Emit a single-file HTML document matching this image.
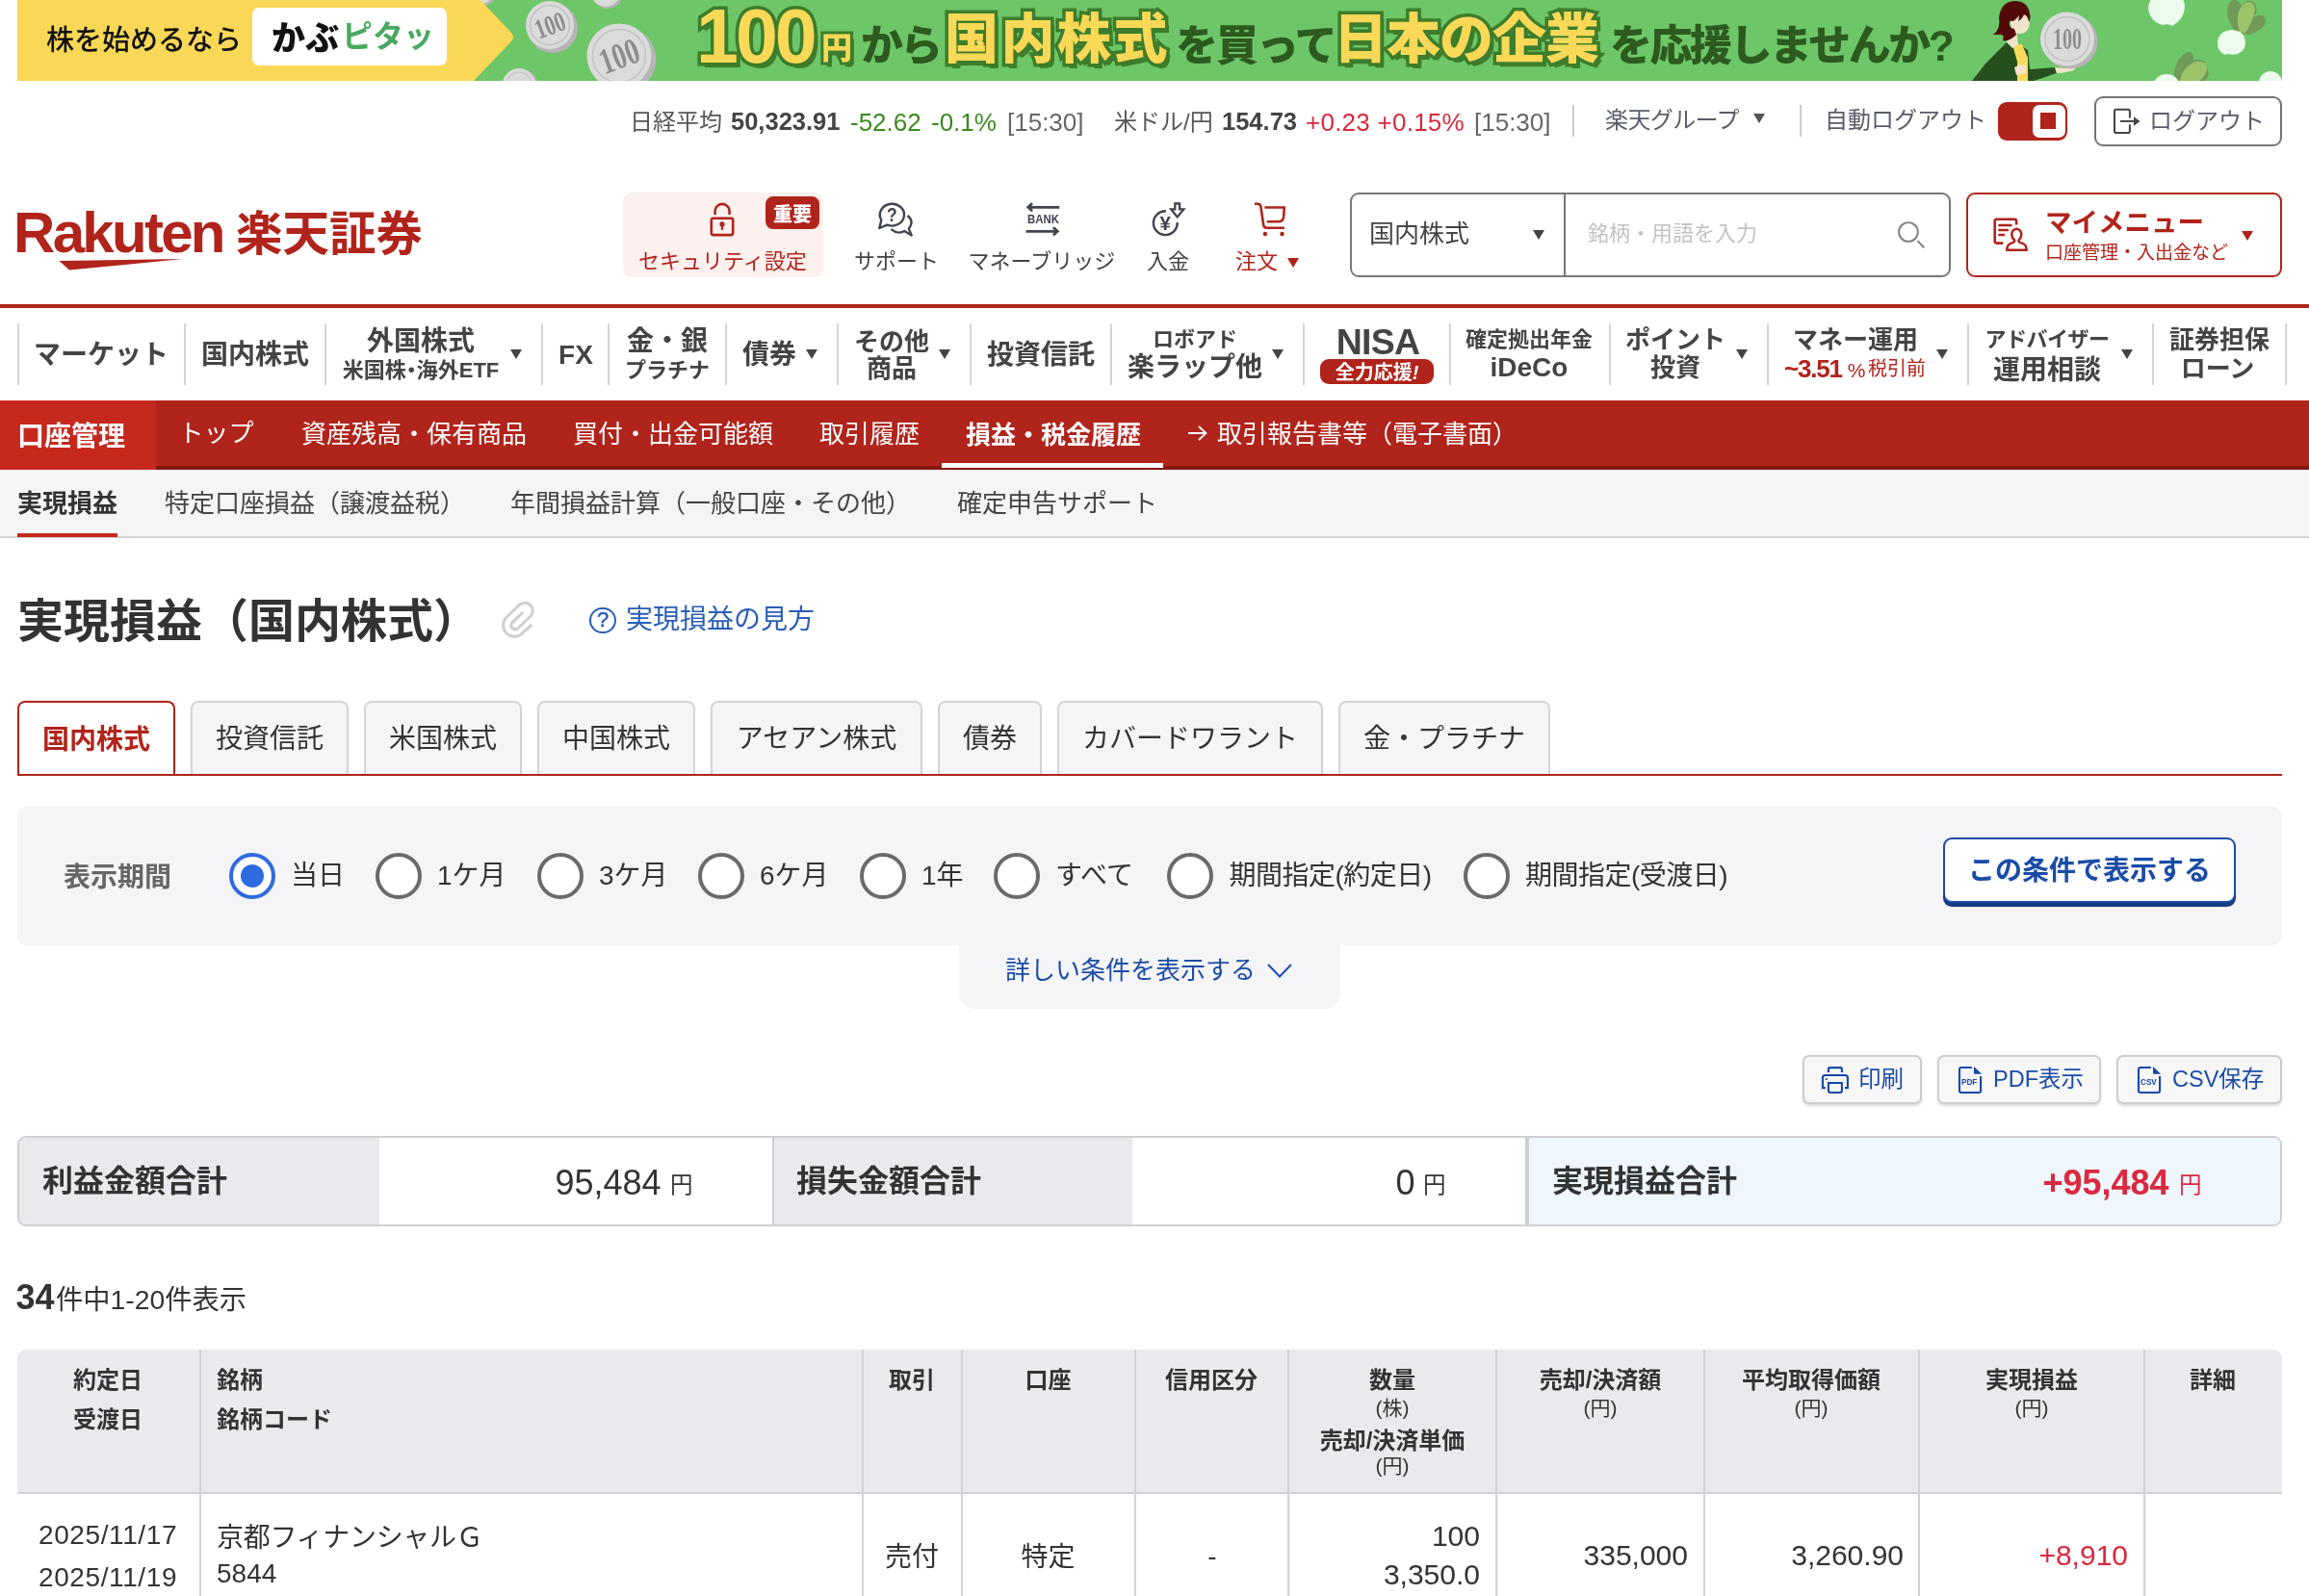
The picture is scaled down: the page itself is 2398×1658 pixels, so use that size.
<!DOCTYPE html>
<html lang="ja">
<head>
<meta charset="utf-8">
<title>実現損益（国内株式） | 楽天証券</title>
<style>
html,body{margin:0;padding:0;background:#fff;}
body{width:2398px;height:1658px;position:relative;overflow:hidden;font-family:"Liberation Sans","Noto Sans CJK JP",sans-serif;color:#333;-webkit-font-smoothing:antialiased;}
.a{position:absolute;white-space:nowrap;line-height:1;}
.b{font-weight:700;}
.red{color:#b0241b;}
.blue{color:#1a4ba7;}
.c{transform:translateX(-50%);}
.td{font-size:28px !important;}
.td.n{font-size:30px !important;}
svg{display:block;overflow:visible;}
/* banner */
#banner{left:18px;top:0;width:2352px;height:84px;background:#6dc667;overflow:hidden;}
.big{font-family:"Liberation Sans","Noto Sans CJK JP",sans-serif;font-weight:900;}
.yl{color:#f9d957;-webkit-text-stroke:7px #3d7d2c;paint-order:stroke fill;text-shadow:3px 4px 0 #3d7d2c,4px 5px 0 #3d7d2c;}
.dg{color:#2c5a1f;}
/* global nav */
.gsep{position:absolute;top:336px;width:2px;height:64px;background:#d4d4d4;}
.gn{position:absolute;white-space:nowrap;line-height:1;font-weight:700;color:#444;font-size:28px;text-align:center;}
.tri{position:absolute;width:0;height:0;border-left:6px solid transparent;border-right:6px solid transparent;border-top:10px solid #444;}
/* red bar */
#rbar{left:0;top:416px;width:2398px;height:68px;background:#b0241b;border-bottom:4px solid #84160e;}
.rb{position:absolute;white-space:nowrap;line-height:1;color:#fff;font-size:26px;top:437.500px;}
/* subnav */
#sub{left:0;top:488px;width:2398px;height:69px;background:#f5f5f7;border-bottom:2px solid #d2d2d4;}
.sb{position:absolute;white-space:nowrap;line-height:1;font-size:26px;top:510px;color:#444;}
/* tabs */
.tab{position:absolute;top:728px;height:76px;box-sizing:border-box;background:#f5f5f7;border:2px solid #d4d4d6;border-bottom:none;border-radius:8px 8px 0 0;font-size:28px;line-height:1;text-align:center;padding-top:23.500px;color:#333;}
.rad{position:absolute;top:886px;width:48px;height:48px;box-sizing:border-box;border:4px solid #6a6a6a;border-radius:50%;background:#fff;}
.rl{position:absolute;white-space:nowrap;line-height:1;font-size:28px;top:896px;color:#333;}
.btn{position:absolute;top:1096px;height:51px;box-sizing:border-box;background:#f7f7f8;border:2px solid #cdcdcf;border-radius:7px;box-shadow:0 1.500px 2.500px rgba(0,0,0,.14);}
.btn span{position:absolute;white-space:nowrap;line-height:1;font-size:23.500px;top:12px;color:#1a4ba7;}
/* table */
.th,.ths{margin-top:0.500px;}
.th{position:absolute;white-space:nowrap;line-height:1;font-size:24px;font-weight:700;color:#333;}
.ths{position:absolute;white-space:nowrap;line-height:1;font-size:21px;color:#333;}
.vs{position:absolute;top:1402px;width:2px;height:256px;background:#d2d2d4;}
.td{position:absolute;white-space:nowrap;line-height:1;font-size:27px;color:#333;}
</style>
</head>
<body>
<div id="wrap" style="position:absolute;left:0;top:0;width:2398px;height:1658px;will-change:transform">
<!-- ===== BANNER ===== -->
<div class="a" id="banner">
  <svg class="a" style="left:0;top:0" width="2351" height="84" viewBox="18 0 2351 84">
    <g id="coins">
      <circle cx="501" cy="-9" r="15" fill="#b5b5b5"/><circle cx="499" cy="-11" r="15" fill="#dbdbdb"/>
      <circle cx="574" cy="29" r="26" fill="#b5b5b5"/><circle cx="571" cy="26" r="25" fill="#dbdbdb"/><circle cx="571" cy="26" r="20.500" fill="none" stroke="#c2c2c2" stroke-width="1.500"/>
      <circle cx="647" cy="62" r="34.500" fill="#b5b5b5"/><circle cx="643" cy="58" r="33.500" fill="#dbdbdb"/><circle cx="643" cy="58" r="27.500" fill="none" stroke="#c2c2c2" stroke-width="1.500"/>
      <circle cx="541" cy="90" r="18" fill="#b5b5b5"/><circle cx="539" cy="88" r="17" fill="#dbdbdb"/><circle cx="539" cy="88" r="13" fill="none" stroke="#c2c2c2" stroke-width="1.200"/>
      <circle cx="631" cy="-6" r="15" fill="#b5b5b5"/><circle cx="629" cy="-8" r="15" fill="#dbdbdb"/>
    </g>
    <path d="M18 0 H499 L530.500 33.500 Q535.500 38 531 43 L492 84 H18 Z" fill="#f8d856"/>
    <text x="571" y="36" font-family="Liberation Serif,serif" font-size="29" font-weight="700" fill="#8c8c8c" text-anchor="middle" textLength="32" lengthAdjust="spacingAndGlyphs" transform="rotate(-20 571 26)">100</text>
    <text x="643" y="71" font-family="Liberation Serif,serif" font-size="38" font-weight="700" fill="#8c8c8c" text-anchor="middle" textLength="42" lengthAdjust="spacingAndGlyphs" transform="rotate(-20 643 58)">100</text>
  </svg>
  <div class="a" style="left:30px;top:27.600px;font-size:29px;font-weight:500;color:#111;font-family:'Liberation Sans','Noto Sans CJK JP',sans-serif">株を始めるなら</div>
  <div class="a" style="left:244px;top:8px;width:202px;height:60px;background:#fff;border-radius:7px"></div>
  <div class="a" style="left:264px;top:21.500px;font-size:35px;font-weight:900;color:#111;font-family:'Liberation Sans','Noto Sans CJK JP',sans-serif">かぶ</div>
  <div class="a" style="left:337px;top:22.300px;font-size:32px;font-weight:700;color:#4aa860;font-family:'Liberation Sans','Noto Sans CJK JP',sans-serif">ピタッ</div>
  <div class="a big yl" style="left:705px;top:-2px;font-size:79px;letter-spacing:-3px">100</div>
  <div class="a big yl" style="left:835px;top:33.900px;font-size:32px;-webkit-text-stroke-width:6px">円</div>
  <div class="a big dg" style="left:876px;top:25.900px;font-size:44px;letter-spacing:-3px">から</div>
  <div class="a big yl" style="left:963px;top:12.500px;font-size:56px;letter-spacing:2.500px">国内株式</div>
  <div class="a big dg" style="left:1203px;top:25.900px;font-size:44px;letter-spacing:-2px">を買って</div>
  <div class="a big yl" style="left:1367px;top:12.500px;font-size:56px;letter-spacing:-1px">日本の企業</div>
  <div class="a big dg" style="left:1654px;top:25.900px;font-size:44px;letter-spacing:-2.500px">を応援しませんか?</div>
  <svg class="a" style="left:0;top:0" width="2351" height="84" viewBox="18 0 2351 84">
    <!-- woman -->
    <path d="M2048 84 L2062 66 L2078 50 L2084 44 L2096 46 L2106 52 L2108 72 L2134 70 L2136 76 L2112 84 Z" fill="#264f1e"/>
    <path d="M2090 46 L2100 46 L2106 60 L2106 84 L2095 84 L2095 64 Z" fill="#fada5e"/>
    <path d="M2086 30 L2094 30 L2096 46 L2090 50 L2084 44 Z" fill="#f2e4cc"/>
    <ellipse cx="2098" cy="24" rx="10" ry="11" fill="#f2e4cc"/>
    <path d="M2070 36 Q2078 30 2076 18 Q2078 2 2092 1 Q2106 1 2108 14 Q2109 20 2107 23 Q2106 16 2102 15 Q2100 20 2096 22 L2097 16 Q2092 22 2090 22 Q2086 20 2087 26 Q2088 30 2092 30 L2094 36 Q2086 44 2080 42 Q2082 36 2078 36 Z" fill="#520a08"/>
    <path d="M2092 70 Q2098 66 2104 68 L2104 76 L2094 78 Z" fill="#f2e4cc"/>
    <path d="M2134 70 Q2146 72 2156 69 L2154 73 Q2144 76 2136 76 Z" fill="#f2e4cc"/>
    <!-- coin -->
    <circle cx="2150" cy="43" r="28.500" fill="#b5b5b5"/><circle cx="2147" cy="40.500" r="28" fill="#dbdbdb"/><circle cx="2147" cy="40.500" r="23" fill="none" stroke="#c2c2c2" stroke-width="1.500"/>
    <text x="2147" y="51" font-family="Liberation Serif,serif" font-size="31" font-weight="700" fill="#8c8c8c" text-anchor="middle" textLength="30" lengthAdjust="spacingAndGlyphs">100</text>
    <!-- turnips & leaves -->
    <path d="M2322 34 Q2308 14 2316 2 Q2322 -4 2328 6 Q2336 -4 2342 4 Q2346 12 2340 18 Q2352 12 2353 22 Q2352 30 2336 36 Z" fill="#6f9a58"/>
    <path d="M2326 34 Q2320 14 2330 4 Q2340 -2 2342 10 Q2340 22 2332 34 Z" fill="#9cc468"/>
    <path d="M2258 84 Q2256 66 2268 56 Q2278 50 2278 62 Q2290 60 2292 70 Q2296 78 2290 84 Z" fill="#6f9a58"/>
    <path d="M2264 84 Q2266 70 2280 64 Q2292 62 2292 72 Q2290 80 2284 84 Z" fill="#9cc468"/>
    <path d="M2231 8 Q2233 -8 2250 -8 Q2269 -8 2269 8 Q2268 20 2256 27 Q2252 24 2246 26 Q2232 22 2231 8 Z" fill="#ecfcec"/>
    <path d="M2303 44 Q2304 32 2318 31 Q2332 32 2332 45 Q2331 56 2318 57 Q2314 55 2311 57 Q2303 54 2303 44 Z" fill="#ecfcec"/>
    <ellipse cx="2250" cy="88" rx="13" ry="11" fill="#ecfcec"/>
    <ellipse cx="2358" cy="86" rx="12" ry="12" fill="#ecfcec"/>
  </svg>
</div>

<!-- ===== TICKER ===== -->
<div class="a" style="left:654px;top:114.500px;font-size:24px;color:#555">日経平均</div>
<div class="a b" style="left:759px;top:113.500px;font-size:25.5px;color:#444">50,323.91</div>
<div class="a" style="left:883px;top:113.500px;font-size:26px;color:#3a8a1e">-52.62</div><div class="a" style="left:967px;top:113.500px;font-size:26px;color:#3a8a1e">-0.1%</div>
<div class="a" style="left:1046px;top:113.500px;font-size:26px;color:#666">[15:30]</div>
<div class="a" style="left:1157px;top:114.500px;font-size:24px;color:#555">米ドル/円</div>
<div class="a b" style="left:1269px;top:113.500px;font-size:25.5px;color:#444">154.73</div>
<div class="a" style="left:1356px;top:113.500px;font-size:26px;letter-spacing:0.250px;color:#d62a3c">+0.23 +0.15%</div>
<div class="a" style="left:1531px;top:113.500px;font-size:26px;color:#666">[15:30]</div>
<div class="a" style="left:1633px;top:109px;width:2px;height:33px;background:#ccc"></div>
<div class="a" style="left:1667px;top:113px;font-size:24px;letter-spacing:-0.600px;color:#595d69">楽天グループ</div>
<div class="tri" style="left:1821px;top:118px;border-top-color:#555"></div>
<div class="a" style="left:1869px;top:109px;width:2px;height:33px;background:#ccc"></div>
<div class="a" style="left:1895px;top:113px;font-size:24px;color:#595d69">自動ログアウト</div>
<div class="a" style="left:2075px;top:106px;width:72px;height:40px;background:#b0241b;border-radius:9px"></div>
<div class="a" style="left:2110.500px;top:109px;width:34.500px;height:34px;background:#fff;border-radius:7px"></div>
<div class="a" style="left:2119px;top:117px;width:16px;height:17px;background:#b0241b"></div>
<div class="a" style="left:2175px;top:100px;width:195px;height:52px;box-sizing:border-box;border:2px solid #757575;border-radius:9px"></div>
<svg class="a" style="left:2180px;top:98px" width="60" height="55" viewBox="2180 98 60 55"><path d="M2211.900 122.600 V115.650 Q2211.900 113.850 2210.100 113.850 H2197.800 Q2196 113.850 2196 115.650 V136.200 Q2196 138 2197.800 138 H2210.100 Q2211.900 138 2211.900 136.200 V129.200" fill="none" stroke="#444" stroke-width="2"/><path d="M2202.050 125.900 H2217" stroke="#444" stroke-width="2"/><path d="M2216 121.300 L2222.600 125.900 L2216 130.700 Z" fill="#444"/></svg>
<div class="a" style="left:2232px;top:113.500px;font-size:24px;color:#595d69">ログアウト</div>

<!-- ===== HEADER ===== -->
<div class="a b red" style="left:14px;top:212px;font-size:60px;letter-spacing:-2.700px" id="rk">Rakuten</div>
<svg class="a" style="left:61px;top:269px" width="130" height="12" viewBox="0 0 130 12"><path d="M0.500 2 L129 0 Q70 6 11 11.500 Z" fill="#b0241b"/></svg>
<div class="a red" style="left:245px;top:219.300px;font-size:48.500px;font-weight:700;font-family:'Liberation Sans','Noto Sans CJK JP',sans-serif" id="rs">楽天証券</div>

<div class="a" style="left:647px;top:200px;width:208px;height:88px;background:#fdf1ef;border-radius:9px"></div>
<div class="a red" style="left:663px;top:261px;font-size:22px">セキュリティ設定</div>
<div class="a" style="left:795px;top:204px;width:56px;height:34px;background:#b0241b;border-radius:8px"></div>
<div class="a b" style="left:803px;top:212.800px;font-size:20px;color:#fff;font-family:'Liberation Sans','Noto Sans CJK JP',sans-serif;font-weight:900">重要</div>
<svg class="a" style="left:720px;top:200px" width="60" height="55" viewBox="720 200 60 55"><rect x="738.800" y="226.700" width="22.400" height="17.400" rx="2" fill="none" stroke="#b0241b" stroke-width="2.600"/><path d="M742.600 222.900 V219.400 A7.500 7.500 0 0 1 757.600 219.400 V222.900" fill="none" stroke="#b0241b" stroke-width="2.600"/><circle cx="750" cy="232.900" r="2.600" fill="#b0241b"/><rect x="748.900" y="233" width="2.200" height="5.900" fill="#b0241b"/></svg>

<svg class="a" style="left:900px;top:200px" width="60" height="55" viewBox="900 200 60 55"><path d="M915.300 228.500 L913.300 237 L921.400 233.600 A12.600 11.400 0 1 0 915.300 228.500 Z" fill="none" stroke="#40444f" stroke-width="2.400" stroke-linejoin="round"/><path d="M942.600 223.800 Q947.500 228.500 946.300 232.500 Q945.500 235.500 943.800 237.600 L946.700 244.500 L939.300 240 Q932.500 244 925.500 238.200" fill="none" stroke="#40444f" stroke-width="2.400" stroke-linejoin="round"/></svg>
<div class="a b" style="left:919.600px;top:212.500px;font-size:20.500px;color:#40444f;transform:scaleX(0.85)">?</div>
<div class="a" style="left:887px;top:261px;font-size:22px;color:#444">サポート</div>

<svg class="a" style="left:1052px;top:200px" width="60" height="55" viewBox="1052 200 60 55"><path d="M1100.200 215.300 H1068.500 M1072.100 211.300 L1067.700 215.300 L1072.100 219.300" fill="none" stroke="#40444f" stroke-width="2.700" stroke-linejoin="miter"/><path d="M1065.600 240.300 H1097.500 M1093.900 236.300 L1098.300 240.300 L1093.900 244.300" fill="none" stroke="#40444f" stroke-width="2.700" stroke-linejoin="miter"/></svg>
<div class="a b" style="left:1066.600px;top:222.300px;font-size:12.500px;color:#40444f;letter-spacing:0px;transform:scaleX(0.91);transform-origin:0 0">BANK</div>
<div class="a" style="left:1005.500px;top:261px;font-size:22px;color:#444">マネーブリッジ</div>

<svg class="a" style="left:1190px;top:200px" width="60" height="55" viewBox="1190 200 60 55"><path d="M1210.950 219.300 A12.400 12.400 0 1 0 1222.700 231.050" fill="none" stroke="#40444f" stroke-width="2.400"/><path d="M1220.300 211.500 H1225.100 V217.400 H1229.300 L1222.700 225.400 L1216.200 217.400 H1220.300 Z" fill="#fff" stroke="#40444f" stroke-width="2.300" stroke-linejoin="miter"/></svg>
<div class="a b" style="left:1204.600px;top:221.500px;font-size:20.500px;color:#40444f">¥</div>
<div class="a" style="left:1191px;top:261px;font-size:22px;color:#444">入金</div>

<svg class="a" style="left:1300px;top:208px" width="38" height="40" viewBox="1300 208 38 40"><path d="M1302.900 211.700 H1306 Q1308.900 211.700 1309.400 214.700 L1312.200 233.800 Q1312.700 236.700 1315.600 236.700 H1333.900" fill="none" stroke="#b0241b" stroke-width="2.600" stroke-linecap="butt" stroke-linejoin="round"/><path d="M1313.400 215.500 H1333.800 L1333.100 225.200 Q1332.600 230.300 1327.500 230.300 H1315.700" fill="none" stroke="#b0241b" stroke-width="2.600" stroke-linejoin="miter"/><circle cx="1313.900" cy="242.900" r="2.250" fill="#b0241b"/><circle cx="1331.500" cy="242.900" r="2.250" fill="#b0241b"/></svg>
<div class="a red" style="left:1283px;top:261px;font-size:22px">注文</div>
<div class="tri" style="left:1337px;top:267.500px;border-top-color:#b0241b"></div>

<div class="a" style="left:1402px;top:200px;width:624px;height:88px;box-sizing:border-box;border:2px solid #777;border-radius:9px"></div>
<div class="a" style="left:1624px;top:201px;width:2px;height:86px;background:#777"></div>
<div class="a" style="left:1422px;top:230px;font-size:26px;color:#444">国内株式</div>
<div class="tri" style="left:1592px;top:239px"></div>
<div class="a" style="left:1649px;top:232px;font-size:22px;color:#c2c2c2">銘柄・用語を入力</div>
<svg class="a" style="left:1960px;top:215px" width="60" height="55" viewBox="1960 215 60 55"><circle cx="1981.950" cy="241" r="9.900" fill="none" stroke="#7f7f7f" stroke-width="1.900"/><path d="M1991.400 250.100 L1998.300 257.300" stroke="#7f7f7f" stroke-width="2"/></svg>

<div class="a" style="left:2042px;top:200px;width:328px;height:88px;box-sizing:border-box;border:2px solid #b0241b;border-radius:9px"></div>
<svg class="a" style="left:2060px;top:215px" width="60" height="55" viewBox="2060 215 60 55"><path d="M2094.100 233.600 V229.750 Q2094.100 227.750 2092.100 227.750 H2073.700 Q2071.700 227.750 2071.700 229.750 V250.600 Q2071.700 252.600 2073.700 252.600 H2080.300" fill="none" stroke="#b0241b" stroke-width="2.600"/><path d="M2076.300 233.950 H2088.500 M2076.300 238.950 H2084.900 M2076.300 243.950 H2081.100" fill="none" stroke="#b0241b" stroke-width="2.400" stroke-linecap="round"/><path d="M2091.600 248.700 A5 6 0 1 1 2097 248.700 Q2095.600 250.700 2097.400 251.600 Q2103.500 253.800 2104 256 L2104.800 259.800 H2084.100 L2084.900 256 Q2085.300 253.800 2091.200 251.600 Q2093 250.700 2091.600 248.700 Z" fill="#fff" stroke="#b0241b" stroke-width="2.500" stroke-linejoin="round"/></svg>
<div class="a b red" style="left:2124px;top:217.500px;font-size:27.500px">マイメニュー</div>
<div class="a red" style="left:2124px;top:253px;font-size:19px">口座管理・入出金など</div>
<div class="tri" style="left:2328px;top:240px;border-top-color:#b0241b"></div>

<div class="a" style="left:0;top:316px;width:2398px;height:4px;background:#b0241b"></div>
<!-- ===== GLOBAL NAV ===== -->
<div class="gsep" style="left:18px"></div><div class="gsep" style="left:191px"></div><div class="gsep" style="left:337px"></div><div class="gsep" style="left:562px"></div><div class="gsep" style="left:631px"></div><div class="gsep" style="left:753px"></div><div class="gsep" style="left:869px"></div><div class="gsep" style="left:1007px"></div><div class="gsep" style="left:1153px"></div><div class="gsep" style="left:1353px"></div><div class="gsep" style="left:1505px"></div><div class="gsep" style="left:1671px"></div><div class="gsep" style="left:1835px"></div><div class="gsep" style="left:2043px"></div><div class="gsep" style="left:2235px"></div><div class="gsep" style="left:2373px"></div>
<div class="gn c" style="left:105px;top:355px">マーケット</div>
<div class="gn c" style="left:265px;top:355px">国内株式</div>
<div class="gn c" style="left:437px;top:341px">外国株式</div>
<div class="gn c" style="left:437px;top:374px;font-size:22px">米国株<span style="margin:0 -5.500px">・</span>海外ETF</div>
<div class="tri" style="left:530px;top:363px"></div>
<div class="gn c" style="left:598px;top:355px">FX</div>
<div class="gn c" style="left:693px;top:341px">金・銀</div>
<div class="gn c" style="left:693px;top:374px;font-size:22px">プラチナ</div>
<div class="gn c" style="left:799px;top:355px">債券</div>
<div class="tri" style="left:837px;top:363px"></div>
<div class="gn c" style="left:926px;top:342px;font-size:26px">その他</div>
<div class="gn c" style="left:926px;top:370px;font-size:26px">商品</div>
<div class="tri" style="left:975px;top:363px"></div>
<div class="gn c" style="left:1081px;top:355px">投資信託</div>
<div class="gn c" style="left:1241px;top:342px;font-size:22px">ロボアド</div>
<div class="gn c" style="left:1241px;top:368px">楽ラップ他</div>
<div class="tri" style="left:1321px;top:363px"></div>
<div class="gn c" style="left:1431px;top:336.500px;font-size:37.500px;letter-spacing:-0.800px">NISA</div>
<div class="a" style="left:1371px;top:373px;width:118px;height:26px;background:#b0241b;border-radius:9px"></div>
<div class="gn c" style="left:1430px;top:377px;font-size:20px;color:#fff;letter-spacing:0">全力応援<i>!</i></div>
<div class="gn c" style="left:1588px;top:342px;font-size:22px">確定拠出年金</div>
<div class="gn c" style="left:1588px;top:367.500px;font-size:28px">iDeCo</div>
<div class="gn c" style="left:1740px;top:340px;font-size:26px">ポイント</div>
<div class="gn c" style="left:1740px;top:368.500px;font-size:26px">投資</div>
<div class="tri" style="left:1803px;top:363px"></div>
<div class="gn c" style="left:1927px;top:340px;font-size:26px">マネー運用</div>
<div class="gn" style="left:1853px;top:370px;font-size:26px;color:#b0241b;letter-spacing:-1.200px">~3.51<span style="font-size:21px;font-weight:400;margin-left:6px;letter-spacing:0">%</span></div><div class="gn" style="left:1940px;top:373px;font-size:20px;font-weight:400;color:#b0241b">税引前</div>
<div class="tri" style="left:2011px;top:363px"></div>
<div class="gn c" style="left:2126px;top:342px;font-size:22px;letter-spacing:-0.500px">アドバイザー</div>
<div class="gn c" style="left:2126px;top:371px">運用相談</div>
<div class="tri" style="left:2203px;top:363px"></div>
<div class="gn c" style="left:2305px;top:340px;font-size:26px">証券担保</div>
<div class="gn c" style="left:2303px;top:370px;font-size:26px">ローン</div>

<!-- ===== RED BAR ===== -->
<div class="a" id="rbar"></div>
<div class="a" style="left:0;top:416px;width:162px;height:72px;background:#c5291e"></div>
<div class="a b" style="left:18px;top:439.500px;font-size:28px;color:#fff">口座管理</div>
<div class="rb" style="left:185.500px;top:436.500px">トップ</div>
<div class="rb" style="left:313px">資産残高・保有商品</div>
<div class="rb" style="left:595px">買付・出金可能額</div>
<div class="rb" style="left:851px">取引履歴</div>
<div class="rb b" style="left:1003px;top:439px">損益・税金履歴</div>
<div class="a" style="left:978px;top:481px;width:230px;height:5px;background:#fff"></div>
<svg class="a" style="left:1234px;top:442px" width="20" height="16" viewBox="0 0 20 16"><path d="M0 8 H18 M11 1 L18.500 8 L11 15" fill="none" stroke="#fff" stroke-width="1.800"/></svg>
<div class="rb" style="left:1264px">取引報告書等（電子書面）</div>
<!-- ===== SUB NAV ===== -->
<div class="a" id="sub"></div>
<div class="sb b" style="left:18px;color:#333">実現損益</div>
<div class="a" style="left:18px;top:554px;width:104px;height:4px;background:#c5291e"></div>
<div class="sb" style="left:171px">特定口座損益（譲渡益税）</div>
<div class="sb" style="left:530px">年間損益計算（一般口座・その他）</div>
<div class="sb" style="left:994px">確定申告サポート</div>

<!-- ===== TITLE ===== -->
<div class="a b" style="left:18px;top:622px;font-size:48px;color:#333">実現損益（国内株式）</div>
<svg class="a" style="left:515px;top:620px" width="45" height="48" viewBox="515 620 45 48"><path d="M552.200 649 L540.900 659.200 A11.700 11.700 0 0 1 525.700 641.600 L539.400 628.400 A8.300 8.300 0 0 1 551.800 639.300 L538.200 652.500 A4.300 4.300 0 0 1 531.600 647.100 L543.300 635.800" fill="none" stroke="#cfcfcf" stroke-width="3.100" stroke-linecap="butt"/></svg>
<div class="a" style="left:612px;top:630.500px;width:27.500px;height:27.500px;box-sizing:border-box;border:2.400px solid #2a5db8;border-radius:50%"></div>
<div class="a" style="left:620px;top:633px;font-size:22px;color:#2a5db8;-webkit-text-stroke:0.500px #2a5db8">?</div>
<div class="a" style="left:650px;top:630px;font-size:28px;color:#2a5db8">実現損益の見方</div>
<!-- ===== TABS ===== -->
<div class="a" style="left:18px;top:804px;width:2352px;height:2px;background:#b0241b"></div>
<div class="tab b" style="left:18px;width:164px;background:#fff;border-color:#b0241b;color:#b0241b;padding-top:25px">国内株式</div>
<div class="tab" style="left:198px;width:164px">投資信託</div>
<div class="tab" style="left:378px;width:164px">米国株式</div>
<div class="tab" style="left:558px;width:164px">中国株式</div>
<div class="tab" style="left:738px;width:220px">アセアン株式</div>
<div class="tab" style="left:974px;width:108px">債券</div>
<div class="tab" style="left:1098px;width:276px">カバードワラント</div>
<div class="tab" style="left:1390px;width:220px">金・プラチナ</div>
<!-- ===== FILTER ===== -->
<div class="a" style="left:18px;top:838px;width:2352px;height:144px;background:#f5f5f7;border-radius:9px"></div>
<div class="a" style="left:996px;top:980px;width:396px;height:68px;background:#f5f5f7;border-radius:0 0 16px 16px"></div>
<div class="a b" style="left:66px;top:897.500px;font-size:28px;color:#666">表示期間</div>
<div class="rad" style="left:238px;border-color:#2f6be0"></div><div class="a" style="left:250px;top:898px;width:24px;height:24px;border-radius:50%;background:#2f6be0"></div>
<div class="rl" style="left:302px">当日</div>
<div class="rad" style="left:390px"></div><div class="rl" style="left:454px">1ケ月</div>
<div class="rad" style="left:558px"></div><div class="rl" style="left:622px">3ケ月</div>
<div class="rad" style="left:725px"></div><div class="rl" style="left:789px">6ケ月</div>
<div class="rad" style="left:893px"></div><div class="rl" style="left:957px">1年</div>
<div class="rad" style="left:1032px"></div><div class="rl" style="left:1096px">すべて</div>
<div class="rad" style="left:1212px"></div><div class="rl" style="left:1276.500px;letter-spacing:-0.500px">期間指定(約定日)</div>
<div class="rad" style="left:1520px"></div><div class="rl" style="left:1584px;letter-spacing:-0.500px">期間指定(受渡日)</div>
<div class="a" style="left:2018px;top:870px;width:304px;height:68px;box-sizing:border-box;background:#fff;border:2px solid #1a4ba7;border-radius:9px;box-shadow:0 4px 0 #173b82"></div>
<div class="a b" style="left:2044px;top:891px;font-size:28px;color:#1a4ba7">この条件で表示する</div>
<div class="a" style="left:1044px;top:995px;font-size:26px;color:#1a4ba7">詳しい条件を表示する</div>
<svg class="a" style="left:1316px;top:1001px" width="26" height="15" viewBox="0 0 26 15"><path d="M1 1 L13 13.500 L25 1" fill="none" stroke="#1a4ba7" stroke-width="2"/></svg>
<!-- ===== ACTION BUTTONS ===== -->
<div class="btn" style="left:1872px;width:124px"><span style="left:56px">印刷</span></div>
<div class="btn" style="left:2012px;width:170px"><span style="left:56px">PDF表示</span></div>
<div class="btn" style="left:2198px;width:172px"><span style="left:56px">CSV保存</span></div>
<svg class="a" style="left:1880px;top:1095px" width="60" height="55" viewBox="1880 1095 60 55"><path d="M1898.950 1113.950 V1110.600 Q1898.950 1109.100 1900.450 1109.100 H1911.400 Q1912.900 1109.100 1912.900 1110.600 V1113.950" fill="none" stroke="#1447a6" stroke-width="2.100"/><path d="M1895.850 1130.150 H1892.900 V1119.650 Q1892.900 1117.050 1895.500 1117.050 H1916.300 Q1918.900 1117.050 1918.900 1119.650 V1130.150 H1916" fill="none" stroke="#1447a6" stroke-width="2.100"/><path d="M1898.950 1125 H1912.900 V1132.950 Q1912.900 1134.950 1910.900 1134.950 H1900.950 Q1898.950 1134.950 1898.950 1132.950 Z" fill="none" stroke="#1447a6" stroke-width="2.100"/><circle cx="1896.900" cy="1121" r="1.100" fill="#1447a6"/></svg>
<svg class="a" style="left:2020px;top:1095px" width="60" height="55" viewBox="2020 1095 60 55"><path d="M2047.900 1108.950 H2036.900 Q2035.000 1108.950 2035.000 1110.850 V1133.050 Q2035.000 1134.950 2036.900 1134.950 H2055.150 Q2057.050 1134.950 2057.050 1133.050 V1118.100" fill="none" stroke="#1447a6" stroke-width="2.100"/><path d="M2050.000 1108 L2058.100 1115.850 H2051.300 Q2050.000 1115.850 2050.000 1114.550 Z" fill="#1447a6"/></svg>
<div class="a b" style="left:2037.200px;top:1118.800px;font-size:9.600px;color:#1447a6;letter-spacing:0;transform:scaleX(0.85);transform-origin:0 0">PDF</div>
<svg class="a" style="left:2206px;top:1095px" width="60" height="55" viewBox="2206 1095 60 55"><path d="M2233.900 1108.950 H2222.900 Q2221.000 1108.950 2221.000 1110.850 V1133.050 Q2221.000 1134.950 2222.900 1134.950 H2241.150 Q2243.050 1134.950 2243.050 1133.050 V1118.100" fill="none" stroke="#1447a6" stroke-width="2.100"/><path d="M2236.000 1108 L2244.100 1115.850 H2237.300 Q2236.000 1115.850 2236.000 1114.550 Z" fill="#1447a6"/></svg>
<div class="a b" style="left:2223.200px;top:1118.800px;font-size:9.600px;color:#1447a6;letter-spacing:0;transform:scaleX(0.85);transform-origin:0 0">CSV</div>
<!-- ===== SUMMARY ===== -->
<div class="a" style="left:18px;top:1180px;width:2352px;height:94px;box-sizing:border-box;border:2px solid #cfcfd1;border-radius:9px;background:#fff;overflow:hidden">
  <div class="a" style="left:0;top:0;width:374px;height:90px;background:#e9eaee"></div>
  <div class="a" style="left:782px;top:0;width:2px;height:90px;background:#cfcfd1"></div>
  <div class="a" style="left:784px;top:0;width:372px;height:90px;background:#e9eaee"></div>
  <div class="a" style="left:1564px;top:0;width:4px;height:90px;background:#cfcfd1"></div>
  <div class="a" style="left:1568px;top:0;width:791px;height:90px;background:#eff6fe"></div>
</div>
<div class="a b" style="left:44px;top:1211px;font-size:32px">利益金額合計</div>
<div class="a" style="left:576.500px;top:1211px;font-size:36px">95,484</div>
<div class="a" style="left:696px;top:1220px;font-size:23.500px">円</div>
<div class="a b" style="left:827px;top:1211px;font-size:32px">損失金額合計</div>
<div class="a" style="left:1449.500px;top:1211px;font-size:36px">0</div>
<div class="a" style="left:1478px;top:1220px;font-size:23.500px">円</div>
<div class="a b" style="left:1612px;top:1211px;font-size:32px">実現損益合計</div>
<div class="a b" style="left:2121.500px;top:1211px;font-size:36px;color:#d9283f;letter-spacing:0">+95,484</div>
<div class="a" style="left:2263px;top:1220px;font-size:23.500px;color:#d9283f">円</div>
<!-- ===== COUNT ===== -->
<div class="a b" style="left:16.500px;top:1330px;font-size:36px">34</div>
<div class="a" style="left:58px;top:1336px;font-size:28.300px">件中1-20件表示</div>
<!-- ===== TABLE ===== -->
<div class="a" style="left:18px;top:1402px;width:2352px;height:148px;background:#e9eaee;border-radius:9px 9px 0 0"></div>
<div class="a" style="left:18px;top:1550px;width:2352px;height:2px;background:#cfcfd1"></div>
<div class="vs" style="left:207px"></div><div class="vs" style="left:895px"></div><div class="vs" style="left:998px"></div><div class="vs" style="left:1178px"></div><div class="vs" style="left:1337px"></div><div class="vs" style="left:1553px"></div><div class="vs" style="left:1769px"></div><div class="vs" style="left:1992px"></div><div class="vs" style="left:2226px"></div>
<div class="th c" style="left:112px;top:1421px">約定日</div>
<div class="th c" style="left:112px;top:1462px">受渡日</div>
<div class="th" style="left:225px;top:1421px">銘柄</div>
<div class="th" style="left:225px;top:1462px">銘柄コード</div>
<div class="th c" style="left:947px;top:1421px">取引</div>
<div class="th c" style="left:1088.500px;top:1421px">口座</div>
<div class="th c" style="left:1258px;top:1421px">信用区分</div>
<div class="th c" style="left:1446px;top:1421px">数量</div>
<div class="ths c" style="left:1446px;top:1451px">(株)</div>
<div class="th c" style="left:1446px;top:1484px">売却/決済単価</div>
<div class="ths c" style="left:1446px;top:1511.500px">(円)</div>
<div class="th c" style="left:1662px;top:1421px">売却/決済額</div>
<div class="ths c" style="left:1662px;top:1451px">(円)</div>
<div class="th c" style="left:1881px;top:1421px">平均取得価額</div>
<div class="ths c" style="left:1881px;top:1451px">(円)</div>
<div class="th c" style="left:2110px;top:1421px">実現損益</div>
<div class="ths c" style="left:2110px;top:1451px">(円)</div>
<div class="th c" style="left:2298px;top:1421px">詳細</div>
<div class="td" style="left:40px;top:1581px;letter-spacing:0.600px">2025/11/17</div>
<div class="td" style="left:40px;top:1625px;letter-spacing:0.600px">2025/11/19</div>
<div class="td" style="left:225px;top:1584px;letter-spacing:-0.300px">京都フィナンシャルＧ</div>
<div class="td" style="left:225px;top:1621px">5844</div>
<div class="td c" style="left:947px;top:1603.500px">売付</div>
<div class="td c" style="left:1088.500px;top:1603.500px">特定</div>
<div class="td c" style="left:1259px;top:1603px">-</div>
<div class="td n" style="right:861px;top:1580.500px">100</div>
<div class="td n" style="right:861px;top:1621px">3,350.0</div>
<div class="td n" style="right:645px;top:1601px">335,000</div>
<div class="td n" style="right:421px;top:1601px">3,260.90</div>
<div class="td n" style="right:188px;top:1601px;color:#d9283f">+8,910</div>

</div>
</body>
</html>
